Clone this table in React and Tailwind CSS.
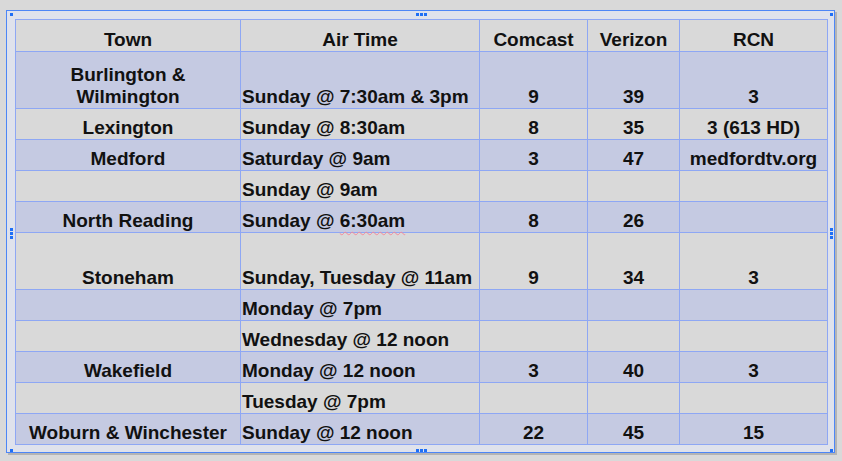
const rows = [
  { town: ['Burlington &', 'Wilmington'], time: 'Sunday @ 7:30am & 3pm', comcast: '9', verizon: '39', rcn: '3', tall: true },
  { town: ['Lexington'], time: 'Sunday @ 8:30am', comcast: '8', verizon: '35', rcn: '3 (613 HD)' },
  { town: ['Medford'], time: 'Saturday @ 9am', comcast: '3', verizon: '47', rcn: 'medfordtv.org' },
  { town: [], time: 'Sunday @ 9am' },
  { town: ['North Reading'], time: 'Sunday @ 6:30am', comcast: '8', verizon: '26', squiggle: true },
  { town: ['Stoneham'], time: 'Sunday, Tuesday @ 11am', comcast: '9', verizon: '34', rcn: '3', tall: true },
  { town: [], time: 'Monday @ 7pm' },
  { town: [], time: 'Wednesday @ 12 noon' },
  { town: ['Wakefield'], time: 'Monday @ 12 noon', comcast: '3', verizon: '40', rcn: '3' },
  { town: [], time: 'Tuesday @ 7pm' },
  { town: ['Woburn & Winchester'], time: 'Sunday @ 12 noon', comcast: '22', verizon: '45', rcn: '15' },
]

const cell = 'border border-[#8ea7f4] align-bottom pb-0 pt-[2px] leading-[22px]'

const Dot = ({ className }) => (
  <div className={'absolute w-[3px] h-[3px] bg-[#1f6ff5] ' + className} />
)

export default function App() {
  return (
    <div
      className="relative w-[842px] h-[461px] bg-[#d9d9d9] pl-[6px] pt-[10px] text-[#111]"
      style={{ fontFamily: '"Liberation Sans", Arial, sans-serif' }}
    >
      <div className="w-[829px] border border-[#4d86f6] bg-[#dfe2ec] pl-[8px] pt-[8px] pr-[7px] pb-[7px] shadow-[2px_2px_0_#b4b4b4]">
        <table className="table-fixed border-collapse w-[812px] border border-[#4f84f4] text-[19px] font-bold">
          <colgroup>
            <col className="w-[225px]" />
            <col className="w-[239px]" />
            <col className="w-[108px]" />
            <col className="w-[92px]" />
            <col className="w-[148px]" />
          </colgroup>
          <thead>
            <tr className="h-[32px] bg-[#d9d9d9]">
              <th className={cell + ' text-center'}>Town</th>
              <th className={cell + ' text-center'}>Air Time</th>
              <th className={cell + ' text-center'}>Comcast</th>
              <th className={cell + ' text-center'}>Verizon</th>
              <th className={cell + ' text-center'}>RCN</th>
            </tr>
          </thead>
          <tbody>
            {rows.map((r, i) => (
              <tr
                key={i}
                className={
                  (r.tall ? 'h-[57px] ' : 'h-[31px] ') +
                  (i % 2 === 0 ? 'bg-[#c5cae2]' : 'bg-[#d9d9d9]')
                }
              >
                <td className={cell + ' text-center'}>
                  {r.town.map((t) => (
                    <div key={t}>{t}</div>
                  ))}
                </td>
                <td className={cell + ' pl-[1px] whitespace-nowrap'}>
                  {r.squiggle ? (
                    <>
                      Sunday @{' '}
                      <span className="underline decoration-wavy decoration-[#f58a9a] decoration-1 underline-offset-[4px]">
                        6:30am
                      </span>
                    </>
                  ) : (
                    r.time
                  )}
                </td>
                <td className={cell + ' text-center'}>{r.comcast}</td>
                <td className={cell + ' text-center'}>{r.verizon}</td>
                <td className={cell + ' text-center'}>{r.rcn}</td>
              </tr>
            ))}
          </tbody>
        </table>
      </div>

      {/* selection handles */}
      <Dot className="left-[10px] top-[13px]" />
      <Dot className="left-[830px] top-[13px]" />
      <Dot className="left-[10px] top-[449px]" />
      <Dot className="left-[830px] top-[449px]" />

      <Dot className="left-[416px] top-[13px]" />
      <Dot className="left-[420px] top-[13px]" />
      <Dot className="left-[424px] top-[13px]" />
      <Dot className="left-[416px] top-[449px]" />
      <Dot className="left-[420px] top-[449px]" />
      <Dot className="left-[424px] top-[449px]" />

      <Dot className="left-[10px] top-[228px]" />
      <Dot className="left-[10px] top-[232px]" />
      <Dot className="left-[10px] top-[236px]" />
      <Dot className="left-[830px] top-[228px]" />
      <Dot className="left-[830px] top-[232px]" />
      <Dot className="left-[830px] top-[236px]" />
    </div>
  )
}
